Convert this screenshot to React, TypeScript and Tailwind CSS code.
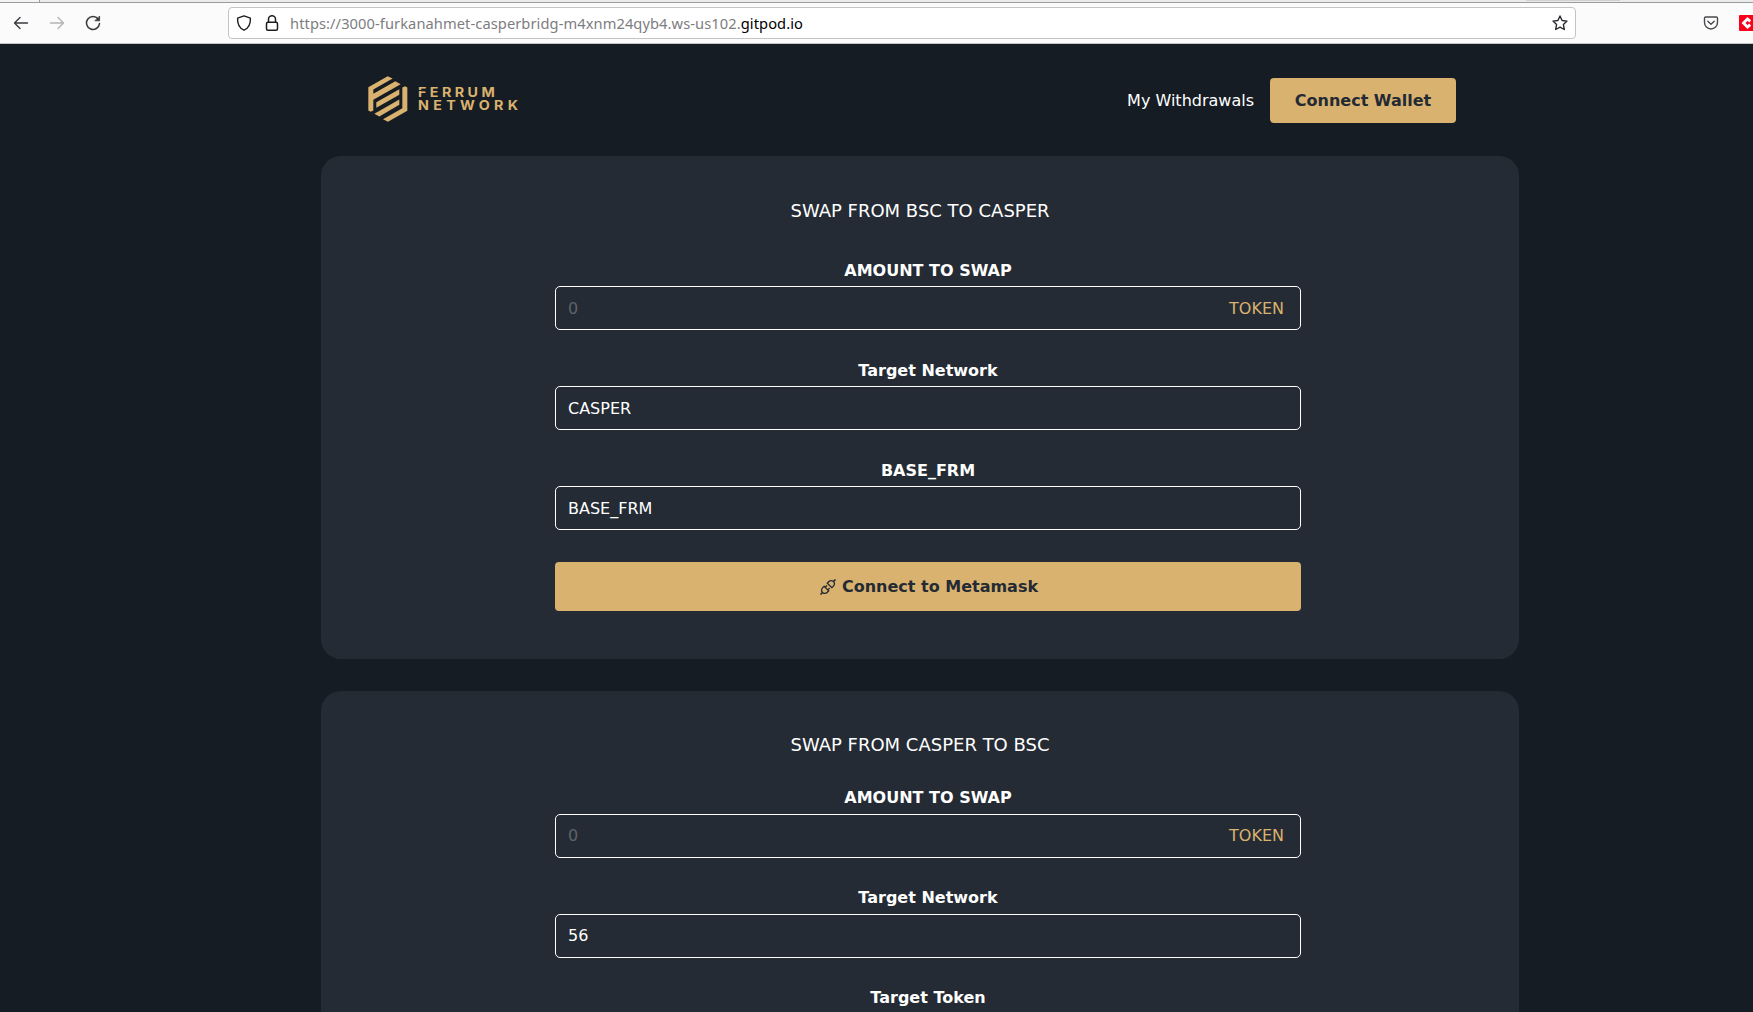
import React from "react";
import { AiOutlineApi } from "react-icons/ai";

function BrowserBar() {
  return (
    <div className="h-11 border-b border-[#c4c4c6] bg-[#fbfbfb]">
      <div className="flex h-[3px] border-b border-[#9c9c9e] bg-[#ebebeb]">
        <div className="w-10 border-r border-[#9c9c9e] bg-[#f4f4f4]" />
        <div className="ml-[1486px] h-px w-[94px] bg-[#d0d0d0]" />
      </div>
      <div className="flex h-10 items-center">
        <svg className="ml-[13px] h-4 w-4" viewBox="0 0 16 16" fill="none" stroke="#3a3a3f" strokeWidth="1.4" strokeLinecap="round" strokeLinejoin="round">
          <path d="M14.5 8H1.5M7 2.5 1.5 8 7 13.5" />
        </svg>
        <svg className="ml-5 h-4 w-4" viewBox="0 0 16 16" fill="none" stroke="#b4b4b6" strokeWidth="1.4" strokeLinecap="round" strokeLinejoin="round">
          <path d="M1.5 8h13M9 2.5 14.5 8 9 13.5" />
        </svg>
        <svg className="ml-5 h-4 w-4" viewBox="0 0 16 16" fill="none" stroke="#3a3a3f" strokeWidth="1.5" strokeLinecap="round">
          <path d="M13.2 4A6.5 6.5 0 1 0 14.5 8.6" />
          <path d="M14.6 1.4v4.4h-4.4z" fill="#3a3a3f" strokeWidth="0.8" strokeLinejoin="round" />
        </svg>
        <div className="ml-[127px] flex h-8 w-[1348px] items-center rounded border border-[#c4c4c6] bg-white">
          <svg className="ml-[7px] h-4 w-4" viewBox="0 0 16 16" fill="none" stroke="#1d1d20" strokeWidth="1.4" strokeLinejoin="round">
            <path d="M8 .9 14.4 3.1C14.7 8.6 12.6 13.2 8 15.2 3.400 13.2 1.300 8.600 1.600 3.100Z" />
          </svg>
          <svg className="ml-3 h-4 w-4" viewBox="0 0 16 16" fill="none" stroke="#1d1d20" strokeWidth="1.5">
            <rect x="2.500" y="7.200" width="11" height="8" rx="1.500" />
            <path d="M4.500 7V4.300a3.500 3.500 0 0 1 7 0V7" />
          </svg>
          <span className="ml-[10px] whitespace-nowrap font-['Noto_Sans',sans-serif] text-[14.67px] leading-5 tracking-[0.08px] text-[#7d7d7f]">
            https://3000-furkanahmet-casperbridg-m4xnm24qyb4.ws-us102.<span className="text-black">gitpod.io</span>
          </span>
          <svg className="mr-[7px] ml-auto h-4 w-4" viewBox="0 0 16 16" fill="none" stroke="#2a2a2e" strokeWidth="1.4" strokeLinejoin="round">
            <path d="m8 1 2.100 4.500 4.900.6-3.600 3.400.9 5L8 12.100l-4.300 2.400.9-5L1 6.100l4.900-.6z" />
          </svg>
        </div>
        <svg className="ml-[127px] h-4 w-4" viewBox="0 0 16 16" fill="none" stroke="#4a4a4f" strokeWidth="1.4" strokeLinecap="round" strokeLinejoin="round">
          <path d="M2.700 2h10.600c.7 0 1.200.5 1.200 1.200v4.300a6.500 6.500 0 0 1-13 0V3.200C1.500 2.500 2 2 2.700 2z" />
          <path d="M4.800 6.200 8 9.200l3.200-3" />
        </svg>
        <svg className="ml-5 h-4 w-[14px]" viewBox="0 0 14 16">
          <path d="M1 0h13v16H1a1 1 0 0 1-1-1V1a1 1 0 0 1 1-1z" fill="#fb0019" />
          <path d="M11.200 6.400 8.500 4 4.500 8l4 4 2.700-2.400" fill="none" stroke="#fff" strokeWidth="2.800" />
        </svg>
      </div>
    </div>
  );
}

function Logo() {
  return (
    <div className="mb-[3px] flex items-center text-[#dab26f]">
      <svg className="h-[46px] w-10" viewBox="53 46.500 120 138" fill="currentColor">
        <path d="M54 80 112 47l15 7-58 33v13l66-38 16 9-82 47v32l-8 4-7-4Z" />
        <path d="M78 125l69-39v17l-69 39Z" />
        <path d="M171 151l-58 33-15-8 58-33v-62l8-4 7 4Z" />
        <path d="M72 160l75-43v16l-60 35Z" />
      </svg>
      <div className="ml-[10px] origin-left scale-x-110 font-['Inter',sans-serif] text-[13px] font-bold leading-[13px]">
        <div className="relative tracking-[3.100px]">
          FERRUM
          <span className="absolute top-[4px] left-0 h-px w-2 bg-[#161c23]" />
        </div>
        <div className="tracking-[3.900px]">NETWORK</div>
      </div>
    </div>
  );
}

type FieldProps = { label: string; value?: string; token?: boolean; low?: boolean };

function Field({ label, value, token, low }: FieldProps) {
  return (
    <label className="flex flex-col">
      <span className={low ? "h-6 pt-px text-center font-bold leading-6" : "h-6 text-center font-bold leading-6"}>{label}</span>
      <span className={low ? "mt-1 flex h-11 items-center rounded-[5px] border border-white pt-0.5 pr-4 pl-3" : "mt-1 flex h-11 items-center rounded-[5px] border border-white pr-4 pl-3"}>
        <input className="min-w-0 flex-1 bg-transparent text-white outline-none placeholder:text-[#5d636b]" placeholder="0" defaultValue={value} />
        {token && <span className="text-[#dab26f]">TOKEN</span>}
      </span>
    </label>
  );
}

export default function App() {
  return (
    <div className="h-[1012px] w-[1753px] overflow-hidden bg-[#161c23] font-['DejaVu_Sans',sans-serif] text-base text-white">
      <BrowserBar />
      <div className="w-[1840px]">
        <header className="mx-auto flex h-28 w-[1104px] items-center justify-between">
          <Logo />
          <nav className="mr-4 flex items-center gap-4">
            <a className="pt-0.5">My Withdrawals</a>
            <button className="h-[45px] w-[186px] rounded bg-[#dab26f] pt-0.5 font-bold text-[#242a33]">Connect Wallet</button>
          </nav>
        </header>
        <main className="mx-auto flex w-[1198px] flex-col gap-8">
          <section className="h-[503px] rounded-[20px] bg-[#242b34] pt-10">
            <h2 className="h-7 pt-px text-center text-lg leading-7">SWAP FROM BSC TO CASPER</h2>
            <div className="mt-[34px] ml-[234px] flex w-[746px] flex-col gap-7">
              <Field label="AMOUNT TO SWAP" token low />
              <Field label="Target Network" value="CASPER" low />
              <Field label="BASE_FRM" value="BASE_FRM" low />
              <button className="mt-1 flex h-[49px] items-center justify-center gap-1 rounded bg-[#dab26f] font-bold text-[#242a33]">
                <AiOutlineApi className="h-5 w-5" />
                Connect to Metamask
              </button>
            </div>
          </section>
          <section className="h-[503px] rounded-[20px] bg-[#242b34] pt-10">
            <h2 className="text-center text-lg leading-7">SWAP FROM CASPER TO BSC</h2>
            <div className="mt-[27px] ml-[234px] flex w-[746px] flex-col gap-7">
              <Field label="AMOUNT TO SWAP" token />
              <Field label="Target Network" value="56" />
              <Field label="Target Token" value="BASE_FRM" />
            </div>
          </section>
        </main>
      </div>
    </div>
  );
}
